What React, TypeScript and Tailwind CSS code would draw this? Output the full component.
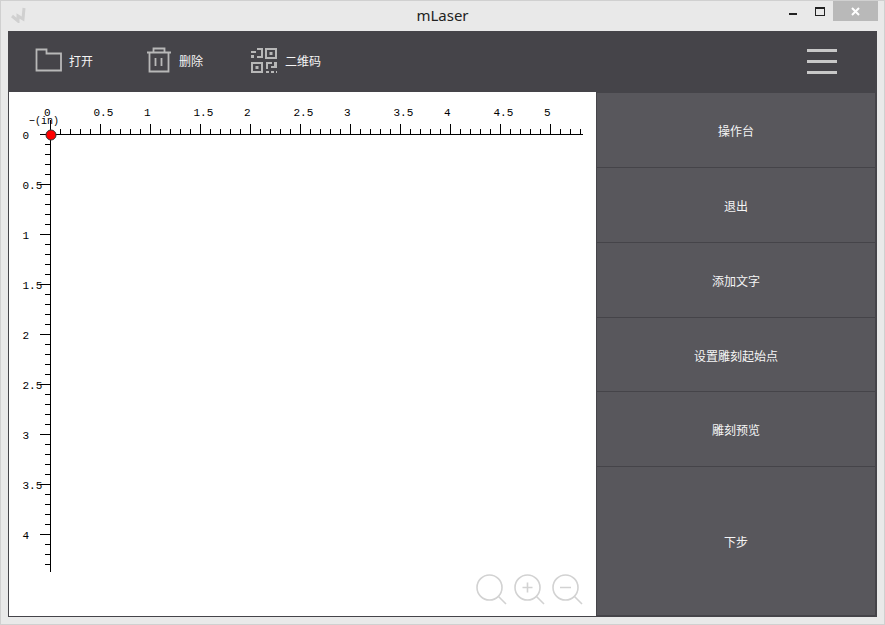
/**
 * mLaser main window: title bar, toolbar, ruler canvas and action list
 */

const MONO = "'Liberation Mono', monospace";

const actions = [
  { label: "操作台", h: "h-[75px]" },
  { label: "退出", h: "h-[75px]" },
  { label: "添加文字", h: "h-[75px]" },
  { label: "设置雕刻起始点", h: "h-[74px]" },
  { label: "雕刻预览", h: "h-[75px]" },
  { label: "下步", h: "flex-1" },
];

function FolderIcon() {
  return (
    <svg width="28" height="29" viewBox="0 0 28 29" fill="none" stroke="#b8b8b8" strokeWidth="1.8">
      <path d="M1.5 2.5h10v4H26v17H1.5z" />
    </svg>
  );
}

function TrashIcon() {
  return (
    <svg width="24" height="29" viewBox="0 0 24 29" fill="none" stroke="#b8b8b8" strokeWidth="1.8">
      <path d="M0 5.5h24M6.5 5.5V1.5h11v4M2.5 5.5v19h19v-19M8.5 11v8M14.5 11v8" />
    </svg>
  );
}

function QrIcon() {
  return (
    <svg width="26" height="29" viewBox="0 0 26 29" fill="#b8b8b8">
      <path d="M6 1h6v2H6zM10 1h2v10h-2zM0 4h5v2H0zM0 8h3v3H0zM6 9h5v2H6z" />
      <path fillRule="evenodd" d="M14 1h12v11H14zM16 3v7h8V3zM18.5 5h3v3h-3z" />
      <path fillRule="evenodd" d="M0 15h12v11H0zM2 17v7h8v-7zM4.5 19h3v3h-3z" />
      <path d="M15 15h6v2h-4v5h-2zM23 15h3v6h-6v-2h3zM15 24h3v2h-3zM20 24h3v2h-3zM25 24h1v2h-1z" />
    </svg>
  );
}

function ToolItem({ icon, label, className }: { icon: React.ReactNode; label: string; className: string }) {
  return (
    <div className={`flex items-center ${className}`}>
      {icon}
      <span className="text-xs text-[#f5f5f5]">{label}</span>
    </div>
  );
}

function Ruler() {
  const xTicks = Array.from({ length: 54 }, (_, i) => i);
  const yTicks = Array.from({ length: 44 }, (_, i) => i);
  const halves = [0, 0.5, 1, 1.5, 2, 2.5, 3, 3.5, 4, 4.5, 5];
  const yLabels = [0, 0.5, 1, 1.5, 2, 2.5, 3, 3.5, 4];

  return (
    <svg className="block h-full w-full" viewBox="9 92 587 524">
      <g stroke="#000" strokeWidth="1" shapeRendering="crispEdges">
        <path d="M40 134.5H583M50.5 120V572" />
        {xTicks.map((i) => (
          <path key={i} d={`M${50.5 + i * 10} 134V${i % 5 === 0 ? 124 : 129}`} />
        ))}
        {yTicks.map((i) => (
          <path key={i} d={`M50 ${134.5 + i * 10}H${i % 5 === 0 ? 40 : 45}`} />
        ))}
      </g>
      <g fontFamily={MONO} fontSize="11" fill="#000">
        {halves.map((v) => (
          <text key={v} x={50 + v * 100 - (Number.isInteger(v) ? 6 : 6.5)} y="116">
            {v}
          </text>
        ))}
        {yLabels.map((v) => (
          <text key={v} x="22.5" y={139 + v * 100}>
            {v}
          </text>
        ))}
        <text x="29" y="124" textLength="30" lengthAdjust="spacingAndGlyphs">−(in)</text>
      </g>
      <circle cx="51" cy="135" r="5" fill="#ff0000" stroke="#333" strokeWidth="1" />
    </svg>
  );
}

function ZoomIcons() {
  return (
    <div className="absolute bottom-[11px] right-[13px] flex gap-[7px]">
      <svg width="31" height="31" viewBox="0 0 31 31" fill="none" stroke="#d2d2d2" strokeWidth="1.6">
        <circle cx="13.5" cy="13.5" r="12.5" />
        <path d="M22.5 22.5l7.5 7.5" />
      </svg>
      <svg width="31" height="31" viewBox="0 0 31 31" fill="none" stroke="#d2d2d2" strokeWidth="1.6">
        <circle cx="13.5" cy="13.5" r="12.5" />
        <path d="M22.5 22.5l7.5 7.5M13.5 8.5v10M8.5 13.5h10" />
      </svg>
      <svg width="31" height="31" viewBox="0 0 31 31" fill="none" stroke="#d2d2d2" strokeWidth="1.6">
        <circle cx="13.5" cy="13.5" r="12.5" />
        <path d="M22.5 22.5l7.5 7.5M8 13.5h11" />
      </svg>
    </div>
  );
}

export default function App() {
  return (
    <div
      className="flex h-[625px] w-[885px] flex-col overflow-hidden border border-[#d0d0d0] bg-[#e9e9e9]"
      style={{ fontFamily: "'Noto Sans', 'Noto Sans CJK SC', sans-serif" }}
    >
      <div className="grid h-[30px] shrink-0 grid-cols-[1fr_auto_1fr]">
        <div className="pl-[10px] pt-[6px]">
          <svg width="16" height="16" viewBox="0 0 16 16" fill="none" stroke="#d0d0d0" strokeWidth="3">
            <path d="M1 9l6 5 0-5 5 3 1-11" />
          </svg>
        </div>
        <div className="pt-[4px] text-[15px] leading-[20px] text-[#222]">mLaser</div>
        <div className="flex items-start justify-end pr-[6px]">
          <div className="mr-[18px] mt-[12px] h-[2px] w-[8px] bg-[#222]" />
          <div className="mr-[8px] mt-[6px] h-[9px] w-[10px] border border-t-2 border-[#222]" />
          <div className="flex h-[20px] w-[45px] items-center justify-center bg-[#b9b9b9]">
            <svg width="9" height="9" viewBox="0 0 9 9" stroke="#fff" strokeWidth="2">
              <path d="M1 1l7 7M8 1l-7 7" />
            </svg>
          </div>
        </div>
      </div>

      <div className="ml-[7px] flex h-[586px] w-[869px] flex-col bg-[#454449]">
        <div className="relative flex h-[61px] shrink-0 items-center pl-[27px]">
          <ToolItem className="w-[112px] gap-[6px]" icon={<FolderIcon />} label="打开" />
          <ToolItem className="w-[104px] gap-[8px]" icon={<TrashIcon />} label="删除" />
          <ToolItem className="gap-[8px]" icon={<QrIcon />} label="二维码" />
          <div className="ml-auto mr-[40px] flex w-[30px] flex-col gap-[8px]">
            <div className="h-[3px] bg-[#c8c8c8]" />
            <div className="h-[3px] bg-[#c8c8c8]" />
            <div className="h-[3px] bg-[#c8c8c8]" />
          </div>
        </div>
        <div className="flex min-h-0 flex-1 pb-[1px] pl-[1px]">
          <div className="relative w-[587px] bg-white">
            <Ruler />
            <ZoomIcons />
          </div>
          <div className="mb-[1px] ml-[1px] mt-[1px] flex w-[278px] flex-col bg-[#58575c]">
            {actions.map((a, i) => (
              <div
                key={a.label}
                className={`flex items-center justify-center pt-[4px] text-xs text-[#f5f5f5] ${a.h} ${
                  i < actions.length - 1 ? "border-b border-[#454449]" : ""
                }`}
              >
                {a.label}
              </div>
            ))}
          </div>
        </div>
      </div>
    </div>
  );
}
